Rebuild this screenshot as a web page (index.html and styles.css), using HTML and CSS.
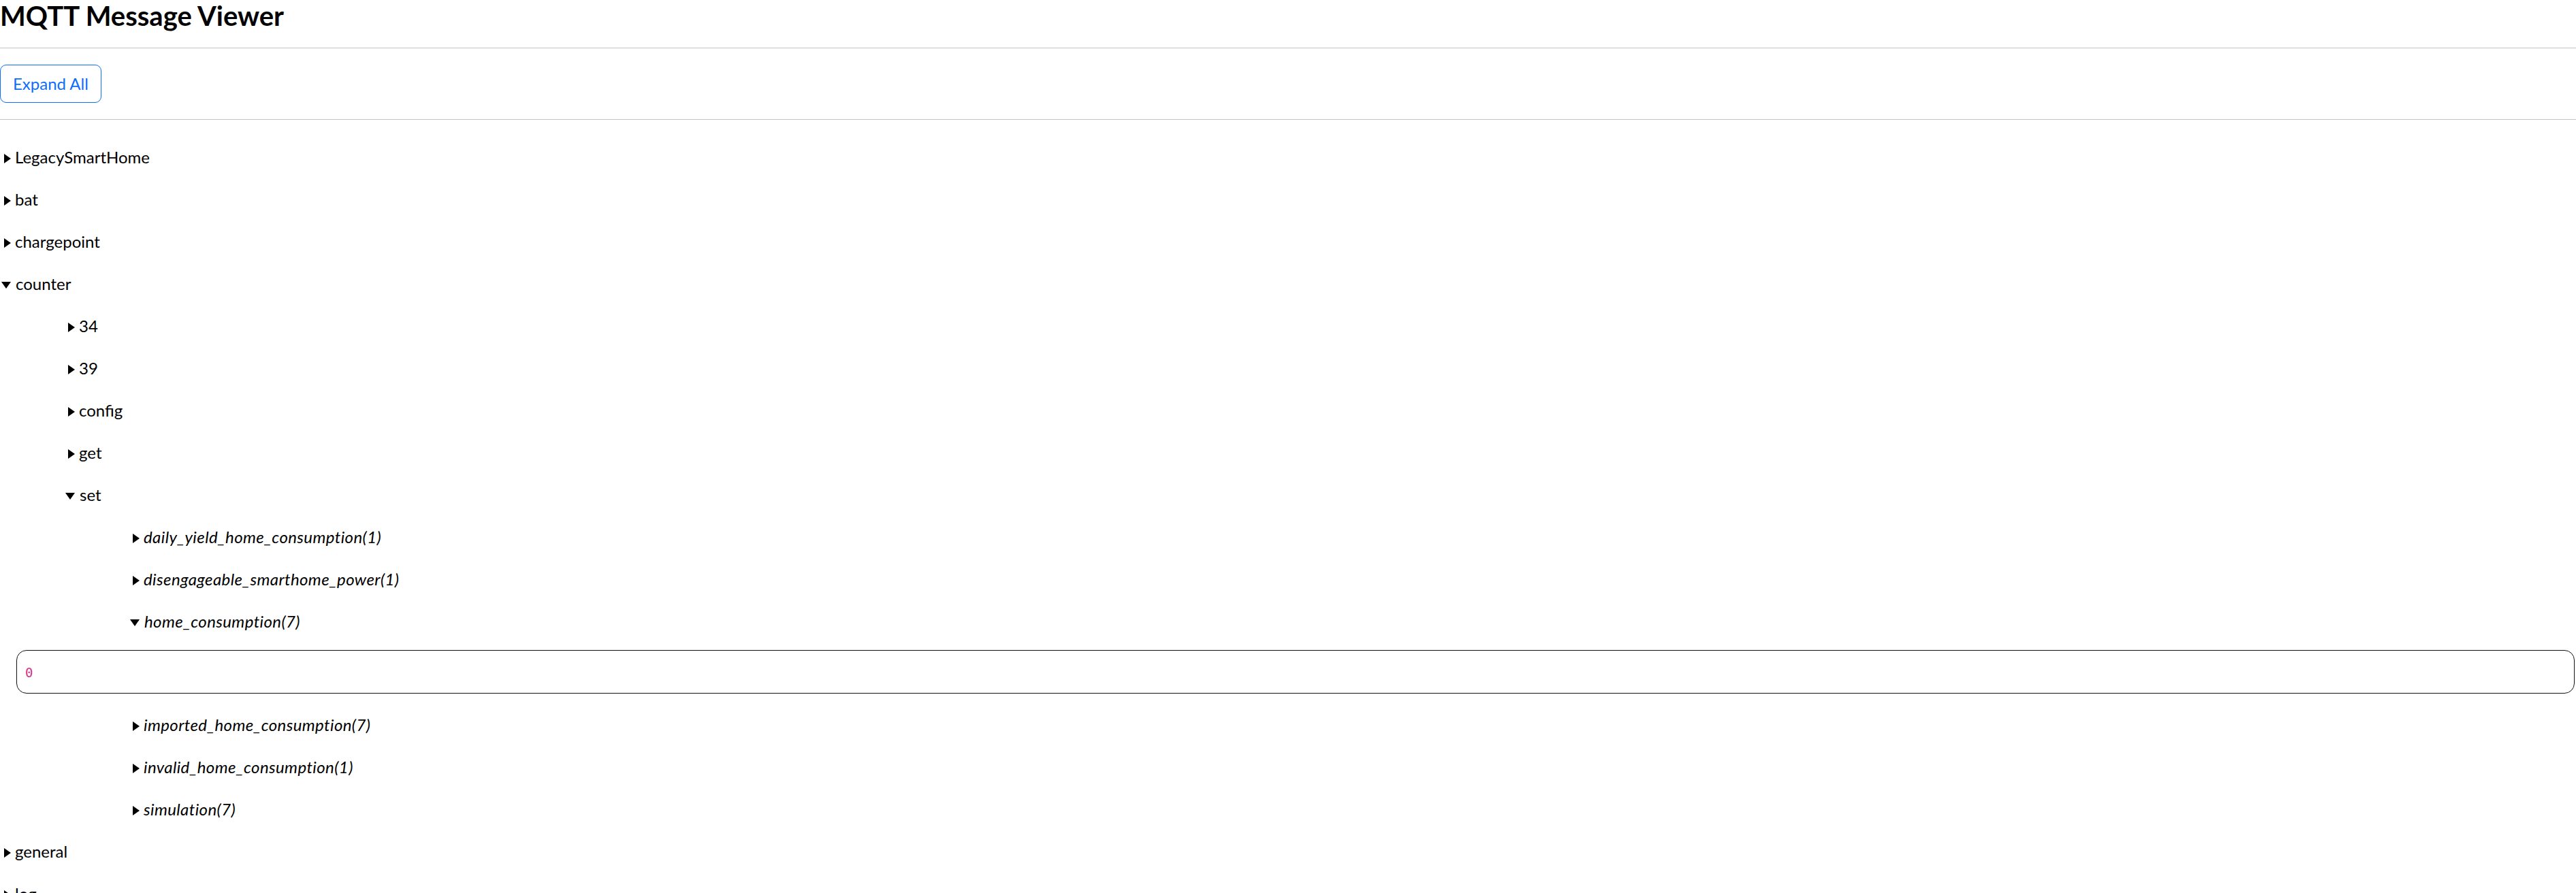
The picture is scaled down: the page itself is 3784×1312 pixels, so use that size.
FILE: index.html
```html
<!DOCTYPE html>
<html lang="en">
  <head>
    <meta charset="UTF-8" />
    <meta name="viewport" content="width=device-width, initial-scale=1.0" />
    <title>MQTT Message Viewer</title>
    <link rel="stylesheet" href="styles.css">
  </head>
  <body>
    <h1 class="title">MQTT Message Viewer</h1>
    <hr />
    <button type="button" class="btn-outline">Expand All</button>
    <hr />
    <div class="tree">
      <details><summary>LegacySmartHome</summary></details>
      <details><summary>bat</summary></details>
      <details><summary>chargepoint</summary></details>
      <details open>
        <summary>counter</summary>
        <details><summary class="lvl-1">34</summary></details>
        <details><summary class="lvl-1">39</summary></details>
        <details><summary class="lvl-1">config</summary></details>
        <details><summary class="lvl-1">get</summary></details>
        <details open>
          <summary class="lvl-1">set</summary>
          <details><summary class="lvl-2 topic">daily_yield_home_consumption(1)</summary></details>
          <details><summary class="lvl-2 topic">disengageable_smarthome_power(1)</summary></details>
          <details open>
            <summary class="lvl-2 topic">home_consumption(7)</summary>
            <div class="message"><code>0</code></div>
          </details>
          <details><summary class="lvl-2 topic">imported_home_consumption(7)</summary></details>
          <details><summary class="lvl-2 topic">invalid_home_consumption(1)</summary></details>
          <details><summary class="lvl-2 topic">simulation(7)</summary></details>
        </details>
      </details>
      <details><summary>general</summary></details>
      <details><summary>log</summary></details>
      <details><summary>optional</summary></details>
      <details><summary>pv</summary></details>
      <details><summary>system</summary></details>
      <details><summary>vehicle</summary></details>
    </div>
  </body>
</html>
```

FILE: styles.css
```css
body {
  margin: 0;
  font-family: "Lato", "Open Sans", sans-serif;
  font-size: 24px;
  color: #000;
  background: #fff;
}
.title {
  margin: 0;
  font-size: 40px;
  font-weight: 700;
  line-height: 46px;
}
hr {
  margin: 24px 0;
  border: 0;
  border-top: 1px solid #c4c4c4;
}
.btn-outline {
  font-family: inherit;
  font-size: 24px;
  line-height: 36px;
  padding: 9px 18px;
  border: 1px solid #0d6efd;
  border-radius: 9px;
  color: #0d6efd;
  background: #fff;
  cursor: pointer;
}
.tree summary {
  list-style: none;
  padding: 13px 0;
  line-height: 36px;
  cursor: pointer;
}
.tree summary::-webkit-details-marker {
  display: none;
}
.tree summary::before {
  content: "";
  display: inline-block;
  vertical-align: middle;
  width: 0;
  height: 0;
  margin: -2px 6px 0 6px;
  border-style: solid;
  border-width: 7px 0 7px 10px;
  border-color: transparent transparent transparent currentColor;
}
.tree details[open] > summary::before {
  margin: -2px 7px 0 2px;
  border-width: 10px 7px 0 7px;
  border-color: currentColor transparent transparent transparent;
}
.tree summary.lvl-1 {
  padding-left: 94px;
}
.tree summary.lvl-2 {
  padding-left: 189px;
}
.tree summary.topic {
  font-style: italic;
  letter-spacing: 0.4px;
}
.message {
  margin: 11px 2px 15px 24px;
  padding: 12px;
  line-height: 36px;
  border: 1px solid #111;
  border-radius: 15px;
}
.message code {
  font-family: "DejaVu Sans Mono", monospace;
  font-size: 19px;
  color: #d63384;
}
```
